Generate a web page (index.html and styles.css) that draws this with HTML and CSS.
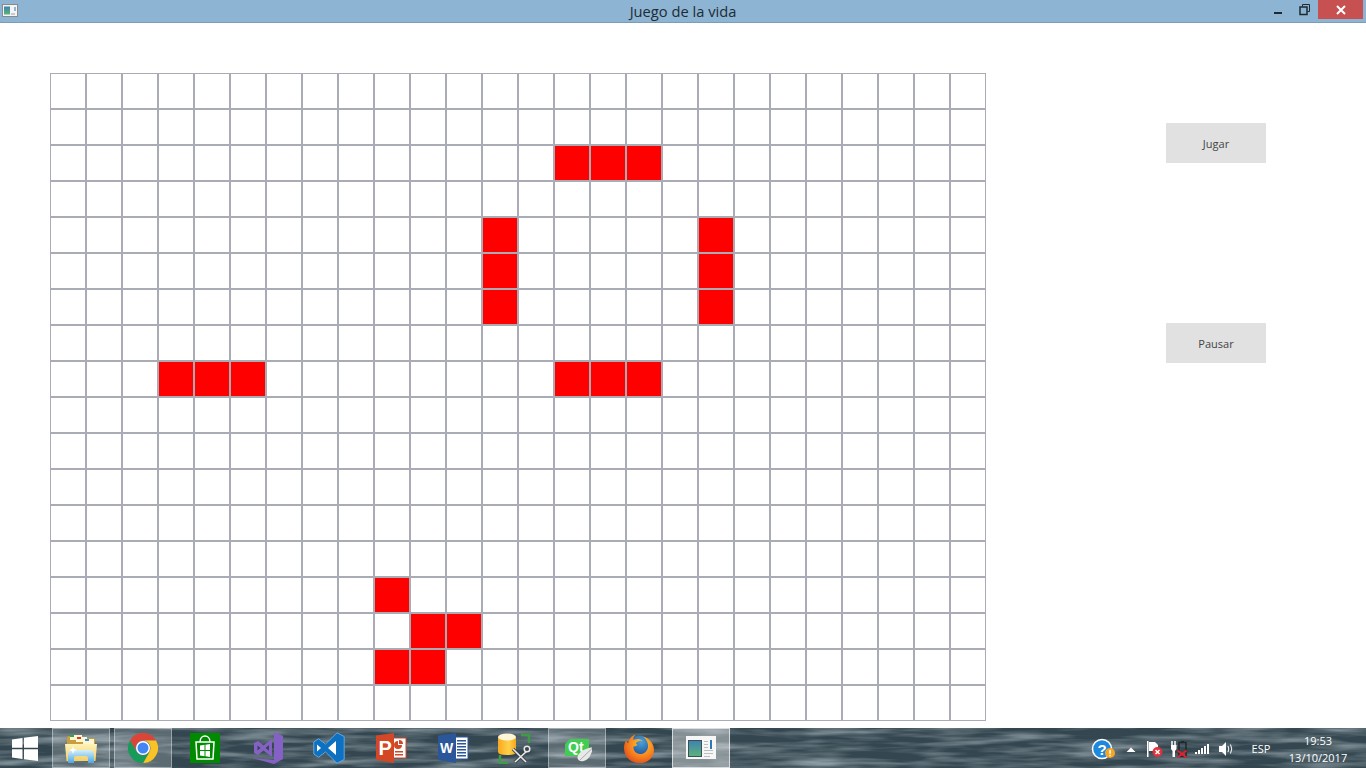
FILE: index.html
```html
<!DOCTYPE html>
<html lang="es">
<head>
<meta charset="utf-8">
<title>Juego de la vida</title>
<link rel="stylesheet" href="styles.css">
</head>
<body>
<header class="titlebar">
  <div class="title-left">
    <svg class="app-icon" width="16" height="13" viewBox="0 0 16 13">
      <rect x="0.5" y="0.5" width="15" height="12" fill="#f4f4f4" stroke="#8a8a8a"/>
      <rect x="2" y="2.5" width="6" height="8" fill="url(#appPane)"/>
      <rect x="12.5" y="3" width="1" height="4" fill="#2f78b8"/>
      <rect x="9" y="9" width="4" height="2" fill="#c9c9c9"/>
    </svg>
  </div>
  <div class="title-text">Juego de la vida</div>
  <div class="controls">
    <button class="ctl" aria-label="Minimizar">
      <svg width="10" height="10" viewBox="0 0 10 10"><rect x="1" y="7" width="8" height="2" fill="#1c2a33"/></svg>
    </button>
    <button class="ctl" aria-label="Restaurar">
      <svg width="12" height="12" viewBox="0 0 12 12"><path d="M3.5 2.5V.5h7v7H8.500" fill="none" stroke="#1c2a33"/><rect x="1" y="3" width="7" height="7.500" fill="none" stroke="#1c2a33" stroke-width="1.500"/></svg>
    </button>
    <button class="ctl close" aria-label="Cerrar">
      <svg width="10" height="10" viewBox="0 0 10 10"><path d="M1 1l8 8M9 1l-8 8" stroke="#fff" stroke-width="2"/></svg>
    </button>
  </div>
</header>

<main class="main">
  <div class="board" id="board"></div>
  <div class="side">
    <button class="action">Jugar</button>
    <button class="action">Pausar</button>
  </div>
</main>

<footer class="taskbar">
  <svg class="sea" width="1366" height="40" aria-hidden="true">
    <defs>
      <filter id="waves" x="0" y="0" width="100%" height="100%">
        <feTurbulence type="fractalNoise" baseFrequency="0.014 0.13" numOctaves="3" seed="11"/>
        <feColorMatrix type="matrix" values="0 0 0 0 0.62  0 0 0 0 0.72  0 0 0 0 0.78  1.1 0 0 0 -0.42"/>
      </filter>
    </defs>
    <rect width="1366" height="40" fill="#34464f"/>
    <rect width="1366" height="40" filter="url(#waves)"/>
  </svg>

  <svg class="defs-only" width="0" height="0" aria-hidden="true">
    <defs>
      <linearGradient id="appPane" x1="0" y1="0" x2="0" y2="1"><stop offset="0" stop-color="#3f83b0"/><stop offset="1" stop-color="#5bb27a"/></linearGradient>
      <linearGradient id="folderFront" x1="0" y1="0" x2="0" y2="1"><stop offset="0" stop-color="#fdf2b8"/><stop offset="1" stop-color="#f2cf6c"/></linearGradient>
      <linearGradient id="glass" x1="0" y1="0" x2="0" y2="1"><stop offset="0" stop-color="#d4effb"/><stop offset="1" stop-color="#4ea6de"/></linearGradient>
      <radialGradient id="foxBody" cx="0.6" cy="0.35" r="0.75"><stop offset="0" stop-color="#ffcb2f"/><stop offset="0.6" stop-color="#f57c1f"/><stop offset="1" stop-color="#d8421a"/></radialGradient>
      <radialGradient id="globe" cx="0.6" cy="0.3" r="0.8"><stop offset="0" stop-color="#4aa3dc"/><stop offset="1" stop-color="#17397f"/></radialGradient>
      <linearGradient id="cyl" x1="0" y1="0" x2="1" y2="0"><stop offset="0" stop-color="#f9a81e"/><stop offset="0.6" stop-color="#ffd04a"/><stop offset="1" stop-color="#f3a81c"/></linearGradient>
    </defs>
  </svg>

  <button class="start" aria-label="Inicio">
    <svg width="26" height="25" viewBox="0 0 26 25"><path fill="#fff" d="M0 3.500L10.500 2v9.800H0zM12 1.800L26 0v11.800H12zM0 13.200h10.500V23L0 21.500zM12 13.200h14V25l-14-1.800z"/></svg>
  </button>

  <nav class="apps">
    <div class="app open">
      <svg width="32" height="32" viewBox="0 0 32 32">
        <path d="M2 6q0-2 2-2h12l2 2h10q2 0 2 2v8H2z" fill="#c99f3e"/>
        <rect x="5" y="3" width="12" height="5" fill="#fff6d0"/><rect x="5" y="3" width="4" height="2" fill="#2aa84a"/>
        <rect x="11" y="5" width="11" height="5" fill="#fff6d0"/><rect x="12" y="5" width="4" height="2" fill="#d2402c"/>
        <rect x="18" y="7" width="11" height="5" fill="#fff6d0"/><rect x="20" y="7" width="4" height="2" fill="#2d8fd8"/>
        <path d="M0 12h32l-1.500 17H1.500z" fill="url(#folderFront)"/>
        <path d="M3 31v-8q0-5 5-5h16q5 0 5 5v8h-6v-5q0-2-2-2H11q-2 0-2 2v5z" fill="url(#glass)"/>
        <path d="M8 14l1 3 3 1-3 1-1 3-1-3-3-1 3-1z" fill="#fff"/>
      </svg>
    </div>
    <div class="app open">
      <svg width="30" height="30" viewBox="0 0 30 30">
        <path d="M2 7.500A15 15 0 0 1 28 7.500H15A7.500 7.500 0 0 0 8.500 18.750z" fill="#db4437"/>
        <path d="M2 7.500A15 15 0 0 1 28 7.500H15A7.500 7.500 0 0 0 8.500 18.750z" fill="#f7c325" transform="rotate(120 15 15)"/>
        <path d="M2 7.500A15 15 0 0 1 28 7.500H15A7.500 7.500 0 0 0 8.500 18.750z" fill="#169c58" transform="rotate(240 15 15)"/>
        <circle cx="15" cy="15" r="7" fill="#fff"/><circle cx="15" cy="15" r="5.500" fill="#4285f4"/>
      </svg>
    </div>
    <div class="app">
      <svg width="30" height="30" viewBox="0 0 30 30">
        <rect width="30" height="30" fill="#008a00"/>
        <path d="M10 9C10 1 20 1 20 9" fill="none" stroke="#fff" stroke-width="1.500"/>
        <path d="M6 9h18l-1 17H7z" fill="none" stroke="#fff" stroke-width="1.500"/>
        <path d="M10 12.500l4.500-.7V17H10zM15.500 11.700l4.500-.7V17h-4.500zM10 18h4.500v5.200L10 22.500zM15.500 18H20v6l-4.500-.7z" fill="#fff"/>
      </svg>
    </div>
    <div class="app">
      <svg width="32" height="32" viewBox="0 0 32 32">
        <path d="M23 0l9 4v23l-9 5L1 26l22 2z" fill="#8661c5"/>
        <path fill-rule="evenodd" d="M3 11l4-2 5.500 4.500L21 7v18l-8.500-6.500L7 23l-4-2zM6.500 13.500v5l3-2.500zM14.500 16l3.500 3v-6z" fill="#8661c5"/>
      </svg>
    </div>
    <div class="app">
      <svg width="32" height="32" viewBox="0 0 32 32">
        <path d="M24 .8L31.200 4.500v23L24 31.200 12.500 20l-7 5.200L.8 22V10l4.700-3.200 7 5.200z" fill="#0e70c0" stroke="#62a8dc" stroke-width="1"/>
        <path d="M4 12.500v7L8 16zM23 9l-8 7 8 7z" fill="#fff"/>
      </svg>
    </div>
    <div class="app">
      <svg width="32" height="32" viewBox="0 0 32 32">
        <rect x="17" y="6" width="14" height="20" fill="#fff" stroke="#d24726" stroke-width="1"/>
        <path d="M23 9a4 4 0 1 0 4 4h-4z" fill="#d24726"/><path d="M24 8a4 4 0 0 1 4 4h-4z" fill="#d24726"/>
        <rect x="20" y="19" width="8" height="1.500" fill="#d24726"/><rect x="20" y="22" width="8" height="1.500" fill="#d24726"/>
        <path d="M1 3.500L19 1v30L1 28z" fill="#d24726"/>
        <text class="badge-letter" x="3.500" y="22.500" font-size="20">P</text>
      </svg>
    </div>
    <div class="app">
      <svg width="32" height="32" viewBox="0 0 32 32">
        <rect x="17" y="5" width="14" height="22" fill="#fff" stroke="#2b579a" stroke-width="1"/>
        <g fill="#2b579a"><rect x="20" y="8" width="9" height="1.500"/><rect x="20" y="11" width="9" height="1.500"/><rect x="20" y="14" width="9" height="1.500"/><rect x="20" y="17" width="9" height="1.500"/><rect x="20" y="20" width="9" height="1.500"/><rect x="20" y="23" width="9" height="1.500"/></g>
        <path d="M1 3.500L19 1v30L1 28z" fill="#2b579a"/>
        <text class="badge-letter" x="3" y="21" font-size="14">W</text>
      </svg>
    </div>
    <div class="app">
      <svg width="34" height="32" viewBox="0 0 34 32">
        <path d="M0 5v15q0 3 9 3t9-3V5z" fill="url(#cyl)"/>
        <ellipse cx="9" cy="5" rx="9" ry="3.500" fill="#fff6d8"/>
        <path d="M23 3h8v8" fill="none" stroke="#3e9c42" stroke-width="2.500"/>
        <path d="M2 23v8h8" fill="none" stroke="#3e9c42" stroke-width="2.500"/>
        <path d="M15 17l13 13M29 19L17 30" stroke="#3d454b" stroke-width="3.200"/>
        <path d="M15 17l13 13M29 19L17 30" stroke="#e9e9e9" stroke-width="1.600"/>
        <circle cx="29" cy="17" r="2.800" fill="#3d454b" stroke="#e9e9e9" stroke-width="1.500"/>
      </svg>
    </div>
    <div class="app open">
      <svg width="30" height="30" viewBox="0 0 30 30">
        <path d="M8 6h19v12l-5 5H3V11z" fill="#41cd52"/>
        <text class="badge-letter" x="6" y="19" font-size="14">Qt</text>
        <path d="M31 14c-6 1-14 4-15.500 10-.5 3 3 5 6 4 6-1 8.500-8 9.500-14z" fill="#e8e8e8"/>
        <path d="M30 15.500L18 27" stroke="#a9a9a9" stroke-width="1"/>
      </svg>
    </div>
    <div class="app">
      <svg width="30" height="30" viewBox="0 0 30 30">
        <circle cx="15" cy="13.500" r="11" fill="url(#globe)"/>
        <path d="M15 30C6.500 30 0 23.500 0 15c0-3 .8-6 2.300-8.300.4 1.700 1 2.800 1.800 3.500C4.800 6 8 2.500 11.500 1.500 9.500 3.500 9 5.500 9.500 7 12 5.500 16 5.500 19 8c-2-.5-5 0-6.500 1.500-1 1 0 2 1 2.500-1.500 1-3 1.500-4 1.500-.5 4 2.500 7.500 6.500 7.500 5 0 8.500-4 8-9-.3-3-2-6-5-8.500 6 1.500 11 7 11 13.500 0 8-7 13.500-15 13.500z" fill="url(#foxBody)"/>
      </svg>
    </div>
    <div class="app active">
      <svg width="30" height="24" viewBox="0 0 30 24">
        <rect width="30" height="23" fill="#f6f6f6"/>
        <rect x="2" y="4" width="14" height="17" fill="#3c4f58"/>
        <rect x="3" y="5" width="12" height="15" fill="url(#appPane)"/>
        <rect x="24" y="4" width="2" height="9" fill="#2f78b8"/>
        <g fill="#bdbdbd"><rect x="18" y="5" width="4" height="1"/><rect x="18" y="8" width="4" height="1"/><rect x="18" y="11" width="4" height="1"/><rect x="18" y="14" width="9" height="1"/><rect x="18" y="17" width="9" height="1"/><rect x="18" y="20" width="6" height="1"/></g>
      </svg>
    </div>
  </nav>

  <div class="tray">
    <svg class="tray-icon help" width="24" height="24" viewBox="0 0 24 24">
      <circle cx="11" cy="13" r="9.500" fill="#1e88dc" stroke="#fff" stroke-width="1.500"/>
      <text class="q" x="11" y="18.500" font-size="15">?</text>
      <circle cx="19" cy="17" r="5" fill="#f5a623"/>
      <rect x="18.300" y="13.800" width="1.500" height="4" fill="#fff"/><rect x="18.300" y="18.800" width="1.500" height="1.500" fill="#fff"/>
    </svg>
    <svg class="tray-icon" width="24" height="24" viewBox="0 0 24 24"><path d="M7.500 16l4.500-4.500 4.500 4.500z" fill="#fff"/></svg>
    <svg class="tray-icon" width="24" height="24" viewBox="0 0 24 24">
      <rect x="4" y="5" width="1.500" height="16" fill="#fff"/>
      <path d="M6 6h6l3 3v6H6z" fill="#fff"/>
      <circle cx="14.500" cy="16" r="5" fill="#e0333c"/>
      <path d="M12.500 14l4 4M16.500 14l-4 4" stroke="#fff" stroke-width="1.500"/>
    </svg>
    <svg class="tray-icon" width="24" height="24" viewBox="0 0 24 24">
      <path d="M5 5v4M8 5v4" stroke="#fff" stroke-width="1.500"/>
      <path d="M4 9h5.500v4l-1.500 2v6H5.500v-6L4 13z" fill="#fff"/>
      <rect x="12" y="6.500" width="7" height="14" fill="none" stroke="#20282d" stroke-width="1.500"/>
      <rect x="14" y="5" width="3" height="1.500" fill="#20282d"/>
      <path d="M10.500 14.500l9 7M19.500 14.500l-9 7" stroke="#e0202a" stroke-width="2"/>
    </svg>
    <svg class="tray-icon" width="24" height="24" viewBox="0 0 24 24" fill="#fff">
      <rect x="4" y="16" width="2" height="2"/><rect x="7" y="14" width="2" height="4"/><rect x="10" y="12" width="2" height="6"/><rect x="13" y="10" width="2" height="8"/><rect x="16" y="8" width="2" height="10"/>
    </svg>
    <svg class="tray-icon gap-after" width="24" height="24" viewBox="0 0 24 24">
      <path d="M4 10h3l4-4v14l-4-4H4z" fill="#fff"/>
      <path d="M13 10q1.500 3 0 6M15.500 8.500q2.500 4.500 0 9" fill="none" stroke="#fff" stroke-width="1"/>
    </svg>
    <div class="lang">ESP</div>
    <div class="clock"><span>19:53</span><span>13/10/2017</span></div>
  </div>
</footer>
<script src="app.js"></script>
</body>
</html>
```

FILE: styles.css
```css
* { box-sizing: border-box; }
html, body { margin: 0; height: 100%; }
body {
  width: 1366px;
  height: 768px;
  overflow: hidden;
  background: #fff;
  display: flex;
  flex-direction: column;
  font-family: "Open Sans", "Noto Sans", sans-serif;
}

/* Title bar */
.titlebar {
  height: 23px;
  flex: none;
  background: #8db4d2;
  border-bottom: 1px solid #7a9dba;
  display: grid;
  grid-template-columns: 1fr auto 1fr;
  align-items: start;
}
.title-left { display: flex; padding: 4px 0 0 2px; }
.app-icon { display: block; }
.title-text {
  font-size: 14.700px;
  line-height: 23px;
  color: #1d2b36;
}
.controls { display: flex; justify-content: flex-end; padding-right: 3px; }
.ctl {
  border: 0;
  padding: 0;
  background: none;
  width: 27px;
  height: 19px;
  display: flex;
  align-items: center;
  justify-content: center;
}
.close { width: 45px; background: #c75050; }

/* Board */
.main {
  flex: 1;
  display: flex;
  padding: 50px 0 0 50px;
}
.board {
  display: grid;
  grid-template-columns: repeat(26, 36px);
  grid-auto-rows: 36px;
  align-self: flex-start;
}
.cell { border: 1px solid #a9abb5; background: #fff; }
.cell.live { background: #f00; }
.side {
  margin-left: 180px;
  padding-top: 50px;
  display: flex;
  flex-direction: column;
  gap: 160px;
  align-items: flex-start;
}
.action {
  width: 100px;
  height: 40px;
  border: 0;
  padding: 0;
  background: #e1e1e1;
  color: #444;
  font-family: "Open Sans", sans-serif;
  font-size: 11px;
}

/* Taskbar */
.taskbar {
  height: 40px;
  flex: none;
  position: relative;
  display: flex;
  align-items: center;
  overflow: hidden;
}
.sea { position: absolute; left: 0; top: 0; }
.defs-only { position: absolute; }
.start {
  position: relative;
  width: 48px;
  height: 40px;
  border: 0;
  padding: 0 0 0 2px;
  background: none;
  display: flex;
  align-items: center;
  justify-content: center;
}
.apps {
  position: relative;
  margin-left: 4px;
  display: flex;
  gap: 4px;
}
.app {
  width: 58px;
  height: 40px;
  display: flex;
  align-items: center;
  justify-content: center;
  border: 1px solid transparent;
}
.app.open { border-color: rgba(255,255,255,.38); background: rgba(255,255,255,.2); }
.app.active { border-color: rgba(255,255,255,.65); background: rgba(255,255,255,.4); }
.badge-letter {
  font-family: "Liberation Sans", sans-serif;
  font-weight: 700;
  fill: #fff;
}
.q {
  font-family: "Liberation Sans", sans-serif;
  font-weight: 700;
  fill: #fff;
  text-anchor: middle;
}
.tray {
  position: relative;
  margin-left: auto;
  padding-right: 16px;
  display: flex;
  align-items: center;
  color: #fff;
}
.tray-icon { display: block; flex: none; }
.help { margin-right: 4px; }
.gap-after { margin-right: 6px; }
.lang { width: 32px; text-align: center; font-size: 11px; }
.clock {
  margin-left: 9px;
  margin-top: 2px;
  width: 64px;
  display: flex;
  flex-direction: column;
  align-items: center;
  font-size: 11px;
  line-height: 17px;
}
```

FILE: app.js
```js
var ROWS = 18, COLS = 26;
var live = {
  2: [14, 15, 16],
  4: [12, 18],
  5: [12, 18],
  6: [12, 18],
  8: [3, 4, 5, 14, 15, 16],
  14: [9],
  15: [10, 11],
  16: [9, 10]
};
var board = document.getElementById('board');
for (var r = 0; r < ROWS; r++) {
  for (var c = 0; c < COLS; c++) {
    var cell = document.createElement('div');
    cell.className = 'cell';
    if (live[r] && live[r].indexOf(c) !== -1) cell.className += ' live';
    board.appendChild(cell);
  }
}
```
